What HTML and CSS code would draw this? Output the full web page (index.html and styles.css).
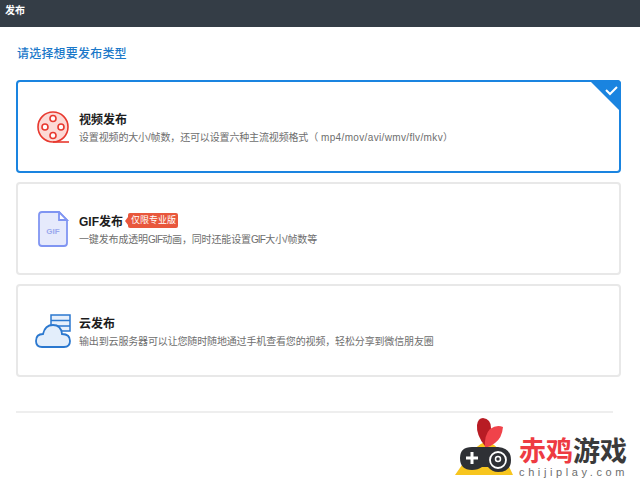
FILE: index.html
```html
<!DOCTYPE html>
<html>
<head>
    <title>发布</title>
    <link rel="stylesheet" href="styles.css">
</head>
<body>
    <div class="title-bar">发布</div>
    <div class="content">
        <h2>请选择想要发布类型</h2>

        <div class="card selected">
            <div class="icon">
                <svg width="36" height="36" viewBox="0 0 36 36">
                    <circle cx="18" cy="18" r="15" fill="#fcd9d5" stroke="#e8392f" stroke-width="1.600"/>
                    <path d="M18 33H34" fill="none" stroke="#e8392f" stroke-width="1.600"/>
                    <circle cx="18" cy="9.500" r="3" fill="#fff" stroke="#e8392f" stroke-width="1.600"/>
                    <circle cx="18" cy="26.500" r="3" fill="#fff" stroke="#e8392f" stroke-width="1.600"/>
                    <circle cx="10" cy="18" r="3" fill="#fff" stroke="#e8392f" stroke-width="1.600"/>
                    <circle cx="26" cy="18" r="3" fill="#fff" stroke="#e8392f" stroke-width="1.600"/>
                </svg>
            </div>
            <div class="card-text">
                <div class="card-title">视频发布</div>
                <div class="card-desc">设置视频的大小/帧数，还可以设置六种主流视频格式（<span class="formats">mp4/mov/avi/wmv/flv/mkv</span>）</div>
            </div>
            <svg class="corner" width="32" height="32" viewBox="0 0 32 32">
                <path d="M0 0H28Q32 0 32 4V32Z" fill="#1a84e0"/>
                <path d="M17 10L21 14L28 7" fill="none" stroke="#fff" stroke-width="2"/>
            </svg>
        </div>

        <div class="card">
            <div class="icon">
                <svg width="36" height="36" viewBox="0 0 36 36">
                    <path d="M7 1H24L32 9V32Q32 35 29 35H7Q4 35 4 32V4Q4 1 7 1Z" fill="#e6eafc" stroke="#8095f2" stroke-width="1.800"/>
                    <path d="M24 1V9H32Z" fill="#fff" stroke="#8095f2" stroke-width="1.800"/>
                    <text class="gif-label" x="18" y="23" text-anchor="middle">GIF</text>
                </svg>
            </div>
            <div class="card-text">
                <div class="card-title">GIF发布<span class="badge">仅限专业版</span></div>
                <div class="card-desc">一键发布成透明<span class="tight">GIF</span>动画，同时还能设置<span class="tight">GIF</span>大小/帧数等</div>
            </div>
        </div>

        <div class="card">
            <div class="icon">
                <svg width="38" height="36" viewBox="0 0 38 36">
                    <path d="M16 2H35V18H16Z" fill="#e6effb" stroke="#2b78cf" stroke-width="1.500"/>
                    <path d="M16 7.500H35M16 13H35" fill="none" stroke="#2b78cf" stroke-width="1.500"/>
                    <path d="M7 34Q1 34 1 28Q1 21 8 21Q10 12 18 12Q26 12 27 21Q35 21 35 28Q35 34 29 34Z" fill="#e3eefb" stroke="#2b78cf" stroke-width="1.800"/>
                </svg>
            </div>
            <div class="card-text">
                <div class="card-title">云发布</div>
                <div class="card-desc">输出到云服务器可以让您随时随地通过手机查看您的视频，轻松分享到微信朋友圈</div>
            </div>
        </div>

        <div class="divider"></div>
    </div>

    <div class="watermark">
        <svg class="wm-logo" width="60" height="62" viewBox="0 0 60 62">
            <path d="M1 58Q10 44 20 33Q27 25 33 25Q40 26 46 34Q53 45 59 58Z" fill="#f7c51e"/>
            <path d="M31 29Q22 18 23 8Q24 1 29 1Q37 2 37 11Q37 20 31 29Z" fill="#b81c24"/>
            <path d="M31 31Q30 18 36 12Q43 7 49 10Q48 21 41 26Q36 30 31 31Z" fill="#f0434a"/>
            <path d="M18 30H44Q57 31 57 43Q57 55 44 55Q38 55 34 50H28Q24 53 18 53Q6 53 6 41Q6 30 18 30Z" fill="#2e3035"/>
            <path d="M18 35V47M12 41H24" fill="none" stroke="#fff" stroke-width="3"/>
            <circle cx="44" cy="43" r="8" fill="none" stroke="#fff" stroke-width="1.800"/>
            <circle cx="44" cy="42" r="2.500" fill="none" stroke="#fff" stroke-width="1.500"/>
        </svg>
        <div>
            <div class="wm-name"><span class="wm-red">赤鸡</span>游戏</div>
            <div class="wm-url">chijiplay.com</div>
        </div>
    </div>
</body>
</html>
```

FILE: styles.css
```css
html, body {
    height: 100%;
}

body {
    font-family: "Liberation Sans", "Noto Sans CJK SC", sans-serif;
    margin: 0;
    background-color: #fff;
    position: relative;
    overflow: hidden;
}

.title-bar {
    height: 27px;
    line-height: 21px;
    padding-left: 5px;
    background-color: #343d46;
    color: #fff;
    font-size: 10px;
    font-weight: 700;
    box-sizing: border-box;
}

.content {
    padding: 0 19px 0 16px;
}

h2 {
    margin: 0;
    padding: 19px 0 0 1px;
    height: 53px;
    box-sizing: border-box;
    font-size: 12px;
    line-height: 16px;
    font-weight: 500;
    letter-spacing: 0.2px;
    color: #1a78c9;
}

.card {
    position: relative;
    display: flex;
    align-items: center;
    height: 93px;
    margin-bottom: 9px;
    padding-left: 17px;
    border: 2px solid #e8e8e8;
    border-radius: 4px;
    box-sizing: border-box;
}

.card.selected {
    border-color: #1a84e0;
}

.icon {
    flex: none;
    display: flex;
    width: 44px;
}

.card-text {
    padding-top: 2px;
}

.card-title {
    display: flex;
    align-items: center;
    height: 18px;
    font-size: 12px;
    font-weight: 700;
    color: #1c1c1c;
}

.card-desc {
    margin-top: 2px;
    font-size: 10px;
    line-height: 16px;
    letter-spacing: -0.150px;
    color: #6e6e6e;
}

.formats {
    margin-left: 3px;
    letter-spacing: 0.350px;
}

.tight {
    letter-spacing: -0.800px;
}

.badge {
    position: relative;
    margin-left: 5px;
    padding: 0 2px 0 3px;
    height: 15px;
    line-height: 15px;
    border-radius: 2px;
    background-color: #e8573c;
    color: #fff;
    font-size: 9px;
    font-weight: 400;
}

.badge::before {
    content: "";
    position: absolute;
    left: -3px;
    top: 4px;
    border-style: solid;
    border-width: 4px 3px 4px 0;
    border-color: transparent #e8573c transparent transparent;
}

.corner {
    position: absolute;
    top: -2px;
    right: -2px;
}

.gif-label {
    font-family: "Liberation Sans", sans-serif;
    font-size: 8px;
    font-weight: 700;
    fill: #9aa8ee;
}

.divider {
    height: 2px;
    margin-top: 34px;
    margin-right: 8px;
    background-color: #eeeeee;
}

.watermark {
    position: absolute;
    right: 12px;
    bottom: 2px;
    display: flex;
    align-items: flex-end;
    gap: 5px;
}

.wm-logo {
    margin-bottom: 1px;
}

.wm-name {
    margin-bottom: -3px;
    font-size: 27px;
    line-height: 30px;
    font-weight: 700;
    color: #3a3a3a;
}

.wm-red {
    color: #ee3b42;
}

.wm-url {
    font-size: 11px;
    line-height: 16px;
    letter-spacing: 3.600px;
    white-space: nowrap;
    color: #6e6e6e;
}
```
